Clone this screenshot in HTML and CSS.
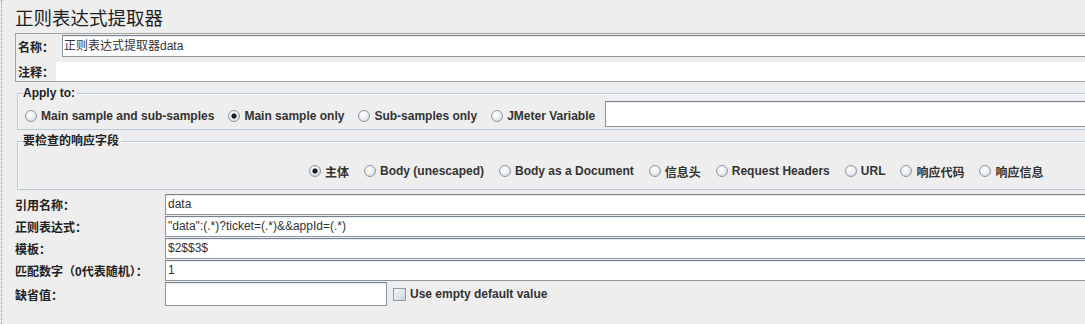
FILE: index.html
```html
<!DOCTYPE html>
<html lang="zh">
<head>
<meta charset="utf-8">
<title>正则表达式提取器</title>
<link rel="stylesheet" href="styles.css">
</head>
<body>
<div class="page">
  <h1 class="title">正则表达式提取器</h1>

  <div class="namepanel">
    <div class="nrow nrow1">
      <span class="nlabel">名称：</span>
      <div class="field">正则表达式提取器data</div>
    </div>
    <div class="nrow nrow2">
      <span class="nlabel">注释：</span>
      <div class="field plain"></div>
    </div>
  </div>

  <fieldset class="group apply">
    <legend>Apply to:</legend>
    <div class="radios">
      <label class="opt"><span class="radio"></span>Main sample and sub-samples</label>
      <label class="opt"><span class="radio on"></span>Main sample only</label>
      <label class="opt"><span class="radio"></span>Sub-samples only</label>
      <label class="opt"><span class="radio"></span>JMeter Variable</label>
      <div class="field varfield"></div>
    </div>
  </fieldset>

  <fieldset class="group check">
    <legend>要检查的响应字段</legend>
    <div class="radios checkrow">
      <label class="opt"><span class="radio on"></span>主体</label>
      <label class="opt"><span class="radio"></span>Body (unescaped)</label>
      <label class="opt"><span class="radio"></span>Body as a Document</label>
      <label class="opt"><span class="radio"></span>信息头</label>
      <label class="opt"><span class="radio"></span>Request Headers</label>
      <label class="opt"><span class="radio"></span>URL</label>
      <label class="opt"><span class="radio"></span>响应代码</label>
      <label class="opt"><span class="radio"></span>响应信息</label>
    </div>
  </fieldset>

  <div class="form">
    <span class="flabel">引用名称：</span>
    <div class="field">data</div>
    <span class="flabel">正则表达式：</span>
    <div class="field">"data":(.*)?ticket=(.*)&amp;&amp;appId=(.*)</div>
    <span class="flabel">模板：</span>
    <div class="field">$2$$3$</div>
    <span class="flabel">匹配数字（0代表随机）：</span>
    <div class="field">1</div>
    <span class="flabel">缺省值：</span>
    <div class="lastrow">
      <div class="field short"></div>
      <label class="opt cbopt"><span class="checkbox"></span>Use empty default value</label>
    </div>
  </div>
</div>
</body>
</html>
```

FILE: styles.css
```css
html, body {
  margin: 0;
  padding: 0;
  background: #eeeeee;
  overflow: hidden;
}

body {
  font-family: "Liberation Sans", "Noto Sans CJK SC", sans-serif;
  font-size: 12px;
  color: #333333;
  height: 324px;
}

.page {
  width: 1110px;
  height: 324px;
  margin-left: 1px;
  border-left: 1px dotted #8d9db0;
  padding-left: 13px;
  box-sizing: border-box;
}

.title {
  margin: 0;
  height: 33px;
  box-sizing: border-box;
  padding-top: 6px;
  font-family: "Noto Sans CJK SC", sans-serif;
  font-weight: 400;
  font-size: 18.5px;
  line-height: 22px;
  color: #1e1e1e;
}

.field {
  background: #ffffff;
  border: 1px solid #8c96a0;
  border-top-color: #77828d;
  box-shadow: inset 0 1px 0 #e9eef3;
  box-sizing: border-box;
  height: 21px;
  line-height: 19px;
  padding-left: 2px;
  white-space: nowrap;
  overflow: hidden;
  color: #333333;
  font-family: "Liberation Sans", "Noto Sans CJK SC", sans-serif;
  font-size: 12px;
}

/* name / comments panel */
.namepanel {
  border: 1px solid #a3a3a3;
  padding: 1px 0 0 1px;
}

.nrow {
  display: flex;
  align-items: center;
}

.nlabel {
  font-family: "Liberation Sans", "Noto Sans CJK SC", sans-serif;
  font-weight: 700;
  color: #222222;
  padding-left: 1px;
  flex: none;
  box-sizing: border-box;
}

.nrow1 .nlabel { width: 45px; }
.nrow1 .field { flex: 1; height: 22px; line-height: 20px; padding-left: 1px; }

.nrow2 { margin-top: 5px; }
.nrow2 .nlabel { width: 39px; }
.nrow2 .field.plain {
  flex: 1;
  height: 19px;
  border: none;
  box-shadow: none;
}

/* titled groups */
.group {
  margin: 4px 0 0 2px;
  padding: 0;
  border: 1px solid #b9c9da;
  box-shadow: inset 1px 1px 0 #f8fbfe;
  min-width: 0;
}

.group legend {
  margin-left: 5px;
  padding: 0 2px 0 0;
  font-family: "Liberation Sans", "Noto Sans CJK SC", sans-serif;
  font-weight: 700;
  font-size: 12px;
  line-height: 14px;
  color: #222222;
}

.radios {
  display: flex;
  align-items: center;
  gap: 15px;
}

.apply .radios {
  padding: 1px 0 2px 7px;
  height: 26px;
  gap: 14px;
}

.apply .opt {
  margin-top: 4px;
}

.check .checkrow {
  padding: 13px 0 8px 291px;
  height: 20px;
}

.opt {
  display: flex;
  align-items: center;
  font-weight: 700;
  color: #333333;
  white-space: nowrap;
  flex: none;
}

.radio {
  width: 12px;
  height: 12px;
  box-sizing: border-box;
  border-radius: 50%;
  border: 1px solid #8e98a4;
  background: radial-gradient(circle at 40% 35%, #ffffff 0%, #f0f3f6 40%, #c6ced8 100%);
  margin-right: 4px;
  flex: none;
}

.radio.on {
  background:
    radial-gradient(circle at 50% 50%, #202020 0, #202020 2.2px, rgba(32,32,32,0) 3px),
    radial-gradient(circle at 40% 35%, #ffffff 0%, #f0f3f6 40%, #c6ced8 100%);
}

.varfield {
  flex: 1;
  height: 26px;
  margin-left: -4px;
}

/* bottom form */
.form {
  margin-top: 4px;
  display: grid;
  grid-template-columns: 150px 1fr;
  grid-template-rows: 21px 21px 21px 21px 24px;
  row-gap: 1px;
  align-items: center;
}

.flabel {
  font-family: "Liberation Sans", "Noto Sans CJK SC", sans-serif;
  font-weight: 700;
  color: #222222;
  white-space: nowrap;
}

.form > .field { height: 21px; }

.lastrow {
  display: flex;
  align-items: center;
  height: 24px;
}

.field.short {
  width: 222px;
  height: 24px;
  flex: none;
}

.cbopt { margin-left: 6px; }

.checkbox {
  width: 13px;
  height: 13px;
  box-sizing: border-box;
  border: 1px solid #8d9aab;
  background: linear-gradient(135deg, #f3f6fa 0%, #dbe4ee 60%, #c8d4e2 100%);
  margin-right: 4px;
  flex: none;
}
```
